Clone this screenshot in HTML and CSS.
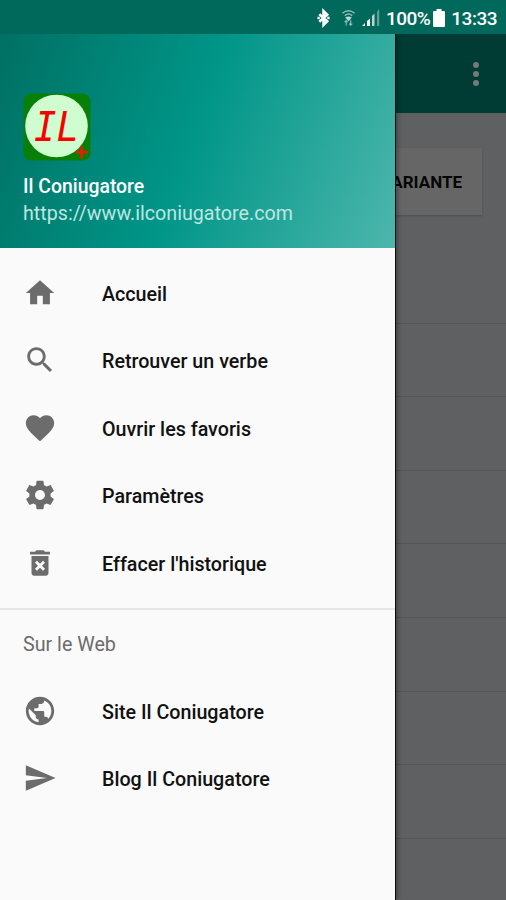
FILE: index.html
```html
<!DOCTYPE html>
<html lang="fr">
<head>
    <meta charset="UTF-8">
    <meta name="viewport" content="width=device-width, initial-scale=1.0">
    <title>Il Coniugatore</title>
    <link rel="stylesheet" href="styles.css">
</head>
<body>
    <div class="screen">
        <div class="status-bar">
            <svg class="bluetooth" width="13" height="20" viewBox="0 0 14 20">
                <path d="M2.500 6 L11 13.500 L7 17.500 V2.500 L11 6.500 L2.500 14" fill="none" stroke="#fff" stroke-width="2.700"/>
                <path d="M0.500 10h2.500M11 10h2.500" stroke="#fff" stroke-width="2.500"/>
            </svg>
            <svg class="wifi" width="15" height="20" viewBox="0 0 16 20">
                <path d="M1.500 5Q8 -0.500 14.500 5M4 7.500Q8 4 12 7.500" fill="none" stroke="#8fbdb6" stroke-width="1.500"/>
                <path d="M4.500 9.500Q8 7.500 11.500 9.500L8 13.500Z" fill="#b9d8d4"/>
                <path d="M5.500 18v-5M3.800 14.500l1.700-1.700 1.700 1.700M10.300 12.500v5M8.600 16l1.700 1.700 1.700-1.700" fill="none" stroke="#8fbdb6" stroke-width="1.200"/>
            </svg>
            <svg class="signal" width="18" height="18" viewBox="0 0 18 18">
                <path d="M0 17l3-3v3zM5 17v-5l3-2.500V17z" fill="#fff"/>
                <path d="M10 17V7l2.500-2.500V17z" fill="#b8d6d1"/>
                <path d="M15 17V2.500L17.200 0V17z" fill="#5f9f96"/>
            </svg>
            <span class="percent">100%</span>
            <svg class="battery" width="12" height="18" viewBox="0 0 12 18">
                <path d="M3.500 0h5v2H11q1 0 1 1v14q0 1-1 1H1q-1 0-1-1V3q0-1 1-1h2.500z" fill="#fff"/>
            </svg>
            <span class="clock">13:33</span>
        </div>

        <div class="page">
            <div class="toolbar">
                <div class="more">
                    <span></span>
                    <span></span>
                    <span></span>
                </div>
            </div>
            <div class="actions">
                <div class="button">VARIANTE</div>
            </div>
            <div class="list">
                <div class="row"></div>
                <div class="row"></div>
                <div class="row"></div>
                <div class="row"></div>
                <div class="row"></div>
                <div class="row"></div>
                <div class="row"></div>
                <div class="row"></div>
            </div>
        </div>

        <div class="drawer">
            <div class="header">
                <svg class="logo" width="68" height="68" viewBox="0 0 68 68">
                    <rect x="0.500" y="0.500" width="67" height="67" rx="8" fill="#088008"/>
                    <circle cx="33.500" cy="33" r="31.300" fill="#d0fdd0"/>
                    <text class="logo-text" x="11" y="48" textLength="45" lengthAdjust="spacingAndGlyphs">IL</text>
                    <path d="M58.500 53v12.500M52.500 59.300h12.500" stroke="#f01800" stroke-width="2.600"/>
                </svg>
                <div class="name">Il Coniugatore</div>
                <div class="link">https://www.ilconiugatore.com</div>
            </div>
            <div class="menu">
                <div class="item">
                    <svg class="icon" viewBox="0 0 24 24"><path d="M10 20v-6h4v6h5v-8h3L12 3 2 12h3v8z"/></svg>
                    <span>Accueil</span>
                </div>
                <div class="item">
                    <svg class="icon" viewBox="0 0 24 24"><path d="M15.500 14h-.79l-.28-.27C15.410 12.590 16 11.110 16 9.500 16 5.910 13.090 3 9.500 3S3 5.910 3 9.500 5.910 16 9.500 16c1.610 0 3.090-.59 4.230-1.570l.27.28v.79l5 4.990L20.490 19l-4.990-5zm-6 0C7.010 14 5 11.990 5 9.500S7.010 5 9.500 5 14 7.010 14 9.500 11.990 14 9.500 14z"/></svg>
                    <span>Retrouver un verbe</span>
                </div>
                <div class="item">
                    <svg class="icon" viewBox="0 0 24 24"><path d="M12 21.350l-1.450-1.320C5.400 15.360 2 12.280 2 8.500 2 5.420 4.420 3 7.500 3c1.740 0 3.410.81 4.500 2.090C13.090 3.810 14.760 3 16.500 3 19.580 3 22 5.420 22 8.500c0 3.780-3.400 6.860-8.550 11.540L12 21.350z"/></svg>
                    <span>Ouvrir les favoris</span>
                </div>
                <div class="item">
                    <svg class="icon" viewBox="0 0 24 24"><path d="M19.430 12.980c.04-.32.07-.64.07-.98s-.03-.66-.07-.98l2.110-1.650c.19-.15.24-.42.12-.64l-2-3.460c-.12-.22-.39-.3-.61-.22l-2.490 1c-.52-.4-1.080-.73-1.690-.98l-.38-2.650C14.460 2.180 14.250 2 14 2h-4c-.25 0-.46.18-.49.42l-.38 2.650c-.61.25-1.170.59-1.690.98l-2.490-1c-.23-.09-.49 0-.61.22l-2 3.460c-.13.22-.07.49.12.64l2.110 1.650c-.04.32-.07.65-.07.98s.03.66.07.98l-2.110 1.650c-.19.15-.24.42-.12.64l2 3.460c.12.22.39.3.61.22l2.490-1c.52.4 1.080.73 1.690.98l.38 2.650c.03.24.24.42.49.42h4c.25 0 .46-.18.49-.42l.38-2.650c.61-.25 1.170-.59 1.690-.98l2.490 1c.23.09.49 0 .61-.22l2-3.460c.12-.22.07-.49-.12-.64l-2.110-1.650zM12 15.500c-1.930 0-3.500-1.570-3.500-3.500s1.570-3.500 3.500-3.500 3.500 1.570 3.500 3.500-1.570 3.500-3.500 3.500z"/></svg>
                    <span>Paramètres</span>
                </div>
                <div class="item">
                    <svg class="icon" viewBox="0 0 24 24"><path fill-rule="evenodd" d="M6 19c0 1.100.9 2 2 2h8c1.100 0 2-.9 2-2V7H6v12zm2.460-7.120l1.410-1.410L12 12.590l2.120-2.120 1.410 1.410L13.410 14l2.120 2.120-1.410 1.410L12 15.410l-2.120 2.120-1.410-1.410L10.590 14l-2.130-2.120zM15.500 4l-1-1h-5l-1 1H5v2h14V4z"/></svg>
                    <span>Effacer l'historique</span>
                </div>
            </div>
            <div class="menu web">
                <div class="subheader">Sur le Web</div>
                <div class="item">
                    <svg class="icon" viewBox="0 0 24 24"><path d="M12 2C6.480 2 2 6.480 2 12s4.480 10 10 10 10-4.480 10-10S17.520 2 12 2zm-1 17.930c-3.950-.49-7-3.850-7-7.930 0-.62.08-1.210.21-1.790L9 15v1c0 1.100.9 2 2 2v1.930zm6.900-2.540c-.26-.81-1-1.390-1.900-1.390h-1v-3c0-.55-.45-1-1-1H8v-2h2c.55 0 1-.45 1-1V7h2c1.100 0 2-.9 2-2v-.41c2.930 1.190 5 4.060 5 7.410 0 2.080-.8 3.970-2.100 5.390z"/></svg>
                    <span>Site Il Coniugatore</span>
                </div>
                <div class="item">
                    <svg class="icon" viewBox="0 0 24 24"><path d="M2.010 21L23 12 2.010 3 2 10l15 2-15 2z"/></svg>
                    <span>Blog Il Coniugatore</span>
                </div>
            </div>
        </div>
    </div>
</body>
</html>
```
FILE: styles.css
```css
* {
    margin: 0;
    padding: 0;
    box-sizing: border-box;
}

body {
    font-family: Roboto, "Noto Sans", sans-serif;
}

.screen {
    position: relative;
    width: 506px;
    height: 900px;
    overflow: hidden;
    background-color: #5f6062;
}

.status-bar {
    position: relative;
    z-index: 2;
    height: 34px;
    padding: 2px 9px 0 0;
    display: flex;
    justify-content: flex-end;
    align-items: center;
    background-color: #00695c;
    color: white;
    font-size: 19px;
    font-weight: 500;
    letter-spacing: -0.5px;
}

.wifi {
    margin-left: 11px;
}

.signal {
    margin-left: 6px;
}

.percent {
    margin-left: 6px;
}

.battery {
    margin-left: 3px;
}

.clock {
    margin-left: 6px;
}

/* page behind the drawer, already dimmed */
.toolbar {
    height: 79px;
    padding-right: 27px;
    display: flex;
    justify-content: flex-end;
    align-items: center;
    background-color: #003c34;
}

.more {
    display: flex;
    flex-direction: column;
    gap: 3px;
}

.more span {
    width: 6px;
    height: 6px;
    border-radius: 50%;
    background-color: #74797c;
}

.actions {
    height: 137px;
    padding: 35px 24px 0 0;
    display: flex;
    justify-content: flex-end;
    align-items: flex-start;
}

.button {
    height: 67px;
    padding: 0 20px;
    line-height: 69px;
    background-color: #666;
    color: #060606;
    font-size: 17px;
    font-weight: 700;
    box-shadow: 0 1px 2px rgba(0, 0, 0, 0.2);
}

.row {
    height: 73.6px;
    border-bottom: 1px solid #545557;
}

.drawer {
    position: absolute;
    top: 0;
    left: 0;
    width: 395px;
    height: 900px;
    background-color: #fafafa;
    box-shadow: 1px 0 0 #0a0a0a, 2px 0 5px rgba(0, 0, 0, 0.4);
}

.header {
    height: 248px;
    padding: 93px 0 0 23px;
    background: linear-gradient(110deg, #006e61, #009688 50%, #4db6ac);
    color: white;
}

.logo {
    display: block;
}

.logo-text {
    font-family: "DejaVu Sans Mono", monospace;
    font-size: 40px;
    font-style: italic;
    fill: #f80000;
}

.name {
    margin-top: 12px;
    line-height: 28px;
    font-size: 19.4px;
    font-weight: 500;
}

.link {
    line-height: 26px;
    font-size: 19.7px;
    color: #bfe5e1;
}

.menu {
    padding: 11px 0;
}

.web {
    padding: 0;
    border-top: 2px solid #e6e6e6;
}

.item {
    height: 67.5px;
    padding-left: 22.5px;
    display: flex;
    align-items: center;
    gap: 45.5px;
    color: #111;
    font-size: 19.7px;
    font-weight: 500;
}

.item span {
    padding-top: 3px;
}

.icon {
    width: 34px;
    height: 34px;
    fill: #6c6c6c;
}

.subheader {
    height: 67.5px;
    padding-left: 23px;
    line-height: 69px;
    font-size: 19.7px;
    color: #6c6c6c;
}
```
